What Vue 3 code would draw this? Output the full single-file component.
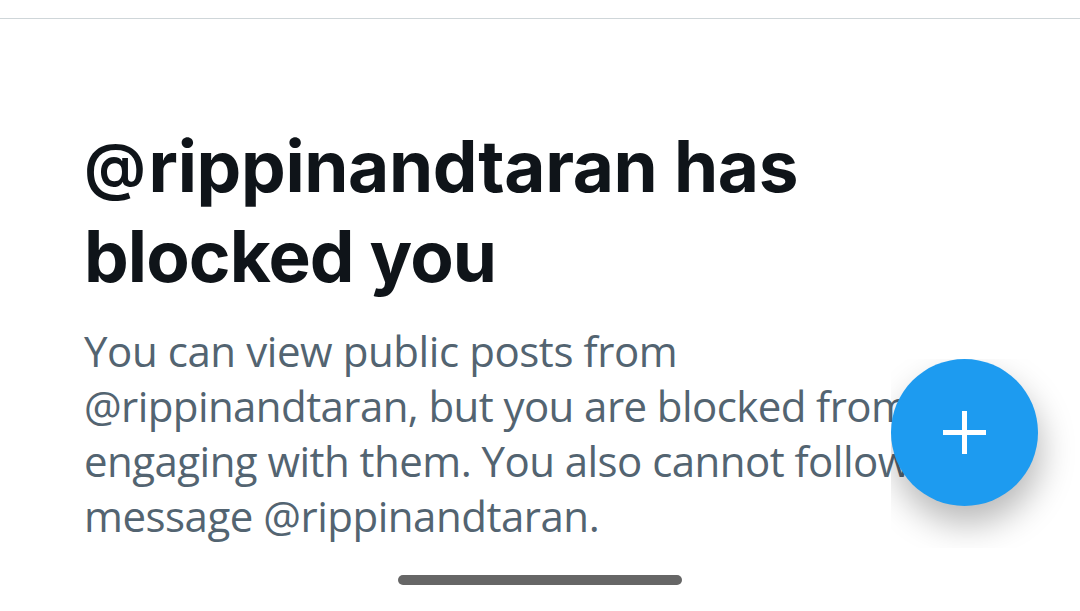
<script setup>
import { ref } from 'vue';

const username = ref('rippinandtaran');

const messageLines = [
  'You can view public posts from',
  `@${username.value}, but you are blocked from`,
  'engaging with them. You also cannot follow or',
  `message @${username.value}.`
];
</script>

<template>
  <div class="screen">
    <div class="top-bar"></div>

    <main class="blocked">
      <h1 class="title">
        <span class="line title-1"><span class="at">@</span>{{ username }} has</span>
        <span class="line title-2">blocked you</span>
      </h1>
      <p class="message">
        <span v-for="(line, i) in messageLines" :key="i" class="line" :class="`message-${i + 1}`">{{ line }}</span>
      </p>
    </main>

    <button type="button" class="fab" aria-label="New post">
      <svg class="fab-icon" viewBox="0 0 43 43">
        <path d="M21.5 0V43M0 21.5H43" />
      </svg>
    </button>

    <div class="home-indicator"></div>
  </div>
</template>

<style scoped>
.screen {
  position: relative;
  display: flex;
  flex-direction: column;
  width: 1080px;
  height: 611px;
  overflow: hidden;
  background: #fff;
  font-family: "Open Sans", "Liberation Sans", sans-serif;
}

.top-bar {
  flex: none;
  height: 18px;
  border-bottom: 1px solid #cfd6d9;
}

.blocked {
  padding: 102px 0 0 84px;
}

.title {
  margin: 0;
  color: #0f1419;
  font-family: Inter, "Liberation Sans", sans-serif;
  font-size: 71px;
  font-weight: 650;
  line-height: 90px;
}

.title-1 {
  height: 90px;
  letter-spacing: -0.35px;
}

.title-2 {
  letter-spacing: -0.9px;
}

/* the @ sits smaller and a little higher than the letters */
.at {
  margin-right: 3px;
  font-size: 62px;
  font-weight: 600;
  line-height: 1;
  vertical-align: 4px;
}

.message {
  margin: 22px 0 0;
  color: #536471;
  font-size: 42px;
  line-height: 55px;
}

.message-1 {
  letter-spacing: -0.42px;
}

.message-2 {
  letter-spacing: -0.58px;
}

.message-3 {
  letter-spacing: -0.54px;
}

.message-4 {
  letter-spacing: -0.48px;
}

.line {
  display: block;
  width: max-content;
  white-space: nowrap;
}

.fab {
  position: absolute;
  top: 359px;
  left: 891px;
  display: flex;
  align-items: center;
  justify-content: center;
  width: 147px;
  height: 147px;
  padding: 0;
  border: none;
  border-radius: 50%;
  background: #1d9bf0;
  box-shadow: 3px 18px 34px rgba(0, 0, 0, 0.28);
  clip-path: inset(0 -42px -42px 0);
}

.fab-icon {
  width: 43px;
  height: 43px;
  fill: none;
  stroke: #fff;
  stroke-width: 5;
}

.home-indicator {
  position: absolute;
  left: 398px;
  bottom: 26px;
  width: 284px;
  height: 10px;
  border-radius: 5px;
  background: #666;
}
</style>
